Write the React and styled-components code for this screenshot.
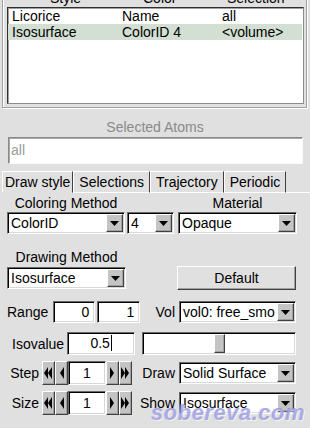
import React from 'react'
import styled, { createGlobalStyle, css } from 'styled-components'

const GlobalStyle = createGlobalStyle`
  html, body {
    margin: 0;
    padding: 0;
    background: #e0e0e0;
  }
  body {
    font-family: "Liberation Sans", Arial, sans-serif;
    font-size: 14px;
    color: #000;
  }
`

const sunken = css`
  box-sizing: border-box;
  border: 1px solid;
  border-color: #696969 #ffffff #ffffff #696969;
  box-shadow: inset 1px 1px 0 #000, inset -1px -1px 0 #d8d8d8;
  background: #fff;
`

const raised = css`
  box-sizing: border-box;
  border: 1px solid;
  border-color: #ffffff #404040 #404040 #ffffff;
  box-shadow: inset -1px -1px 0 #a0a0a0;
`

const Page = styled.div`
  position: relative;
  width: 310px;
  height: 428px;
  overflow: hidden;
  background: #e0e0e0;
`

const ListFrame = styled.div`
  margin: -12px 3px 0 2px;
  padding: 0 2px 3px 4px;
  border: 1px solid #a0a0a0;
  box-shadow: inset 1px 1px 0 #fff, 1px 1px 0 #fff;
`

const ColumnHeader = styled.div`
  display: grid;
  grid-template-columns: 93px 84px 1fr;
  padding-left: 43px;
  height: 18px;
  line-height: 18px;
`

const ListBox = styled.div`
  box-sizing: border-box;
  height: 97px;
  background: #fff;
  border: 1px solid;
  border-color: #303030 #8c8c8c #8c8c8c #303030;
  box-shadow: inset 1px 1px 0 #a0a0a0;
`

const ListRow = styled.div`
  display: grid;
  grid-template-columns: 110px 100px 1fr;
  height: 16px;
  line-height: 16px;
  padding-left: 4px;
  margin-right: 1px;
  background: ${p => (p.$selected ? '#d3dfd2' : 'transparent')};
`

const SectionTitle = styled.div`
  margin-top: 11px;
  height: 16px;
  line-height: 16px;
  text-align: center;
  color: #8a8a8a;
`

const SelectionField = styled.div`
  ${sunken}
  border-color: #8a8a8a #fafafa #fafafa #8a8a8a;
  box-shadow: inset 1px 1px 0 #a8a8a8;
  margin: 2px 7px 0 8px;
  height: 27px;
  line-height: 25px;
  padding-left: 2px;
  color: #9a9a9a;
`

const TabBar = styled.div`
  display: flex;
  margin-top: 7px;
  height: 22px;
  padding-left: 2px;
`

const Tab = styled.div`
  box-sizing: border-box;
  height: 22px;
  line-height: 20px;
  padding: 0 ${p => (p.$active ? '2px' : '5px')};
  border-left: 1px solid #fff;
  border-top: 1px solid #fff;
  border-right: 1px solid #404040;
  border-bottom: 1px solid ${p => (p.$active ? 'transparent' : '#fff')};
  white-space: nowrap;
`

const TabFill = styled.div`
  flex: 1;
  border-bottom: 1px solid #fff;
`

const Row = styled.div`
  display: flex;
  align-items: center;
  justify-content: space-between;
  height: ${p => p.$h || 22}px;
  margin-top: ${p => p.$mt || 0}px;
  padding: 0 ${p => p.$pr ?? 14}px 0 7px;
`

const Group = styled.div`
  display: flex;
  align-items: center;
  gap: ${p => p.$gap ?? 4}px;
`

const Caption = styled.div`
  width: ${p => p.$w}px;
  text-align: center;
  line-height: 17px;
`

const Label = styled.span`
  width: ${p => (p.$w ? `${p.$w}px` : 'auto')};
  margin-left: ${p => p.$ml || 0}px;
  text-align: right;
  white-space: nowrap;
`

const SelectBox = styled.div`
  ${sunken}
  display: flex;
  align-items: center;
  width: ${p => p.$w}px;
  height: 22px;
  padding: 0 1px 0 3px;
`

const SelectText = styled.span`
  flex: 1;
  overflow: hidden;
  white-space: nowrap;
`

const ArrowButton = styled.span`
  ${raised}
  display: flex;
  align-items: center;
  justify-content: center;
  flex: none;
  width: 17px;
  height: 18px;
  background: #c4c4c4;
`

const PushButton = styled.div`
  ${raised}
  display: flex;
  align-items: center;
  justify-content: center;
  width: 119px;
  height: 24px;
`

const Field = styled.div`
  ${sunken}
  width: ${p => p.$w}px;
  height: ${p => p.$h || 22}px;
  line-height: ${p => (p.$h || 22) - 2}px;
  padding: 0 5px;
  text-align: ${p => p.$align || 'right'};
`

const Caret = styled.span`
  display: inline-block;
  width: 1px;
  height: 16px;
  margin-left: 1px;
  vertical-align: -3px;
  background: #000;
`

const Trough = styled.div`
  ${sunken}
  position: relative;
  width: 154px;
  height: 23px;
`

const Thumb = styled.div`
  ${raised}
  position: absolute;
  top: 1px;
  width: 11px;
  height: 19px;
  background: #c4c4c4;
`

const Spin = styled.div`
  display: flex;
  align-items: center;
`

const SpinButton = styled.div`
  ${raised}
  display: flex;
  align-items: center;
  justify-content: center;
  width: 13px;
  height: 24px;
  background: #c4c4c4;
`

const Watermark = styled.div`
  position: absolute;
  right: 5px;
  bottom: 2px;
  font-size: 22px;
  font-weight: bold;
  font-style: italic;
  letter-spacing: 0.5px;
  color: rgba(130, 130, 215, 0.6);
  text-shadow: 1px 1px 0 rgba(255, 255, 255, 0.6), -1px 0 0 rgba(200, 200, 240, 0.5);
  pointer-events: none;
`

const DownArrow = () => (
  <svg width="9" height="5" viewBox="0 0 9 5">
    <polygon points="0,0 9,0 4.5,5" fill="#000" />
  </svg>
)

const Select = ({ w, children }) => (
  <SelectBox $w={w}>
    <SelectText>{children}</SelectText>
    <ArrowButton>
      <DownArrow />
    </ArrowButton>
  </SelectBox>
)

const SpinArrow = ({ dir, double }) => {
  const tri = x => (dir === 'left' ? `${x},6 ${x + 4},0 ${x + 4},12` : `${x + 4},6 ${x},0 ${x},12`)
  return (
    <svg width="9" height="12" viewBox="0 0 9 12">
      {double ? (
        <>
          <polygon points={tri(0)} fill="#000" />
          <polygon points={tri(4)} fill="#000" />
        </>
      ) : (
        <polygon points={tri(dir === 'left' ? 3 : 2)} fill="#000" />
      )}
    </svg>
  )
}

const Spinner = ({ value }) => (
  <Spin>
    <SpinButton><SpinArrow dir="left" double /></SpinButton>
    <SpinButton><SpinArrow dir="left" /></SpinButton>
    <Field $w={38} $h={24} $align="center">{value}</Field>
    <SpinButton><SpinArrow dir="right" /></SpinButton>
    <SpinButton><SpinArrow dir="right" double /></SpinButton>
  </Spin>
)

const Slider = ({ value, min = 0, max = 1 }) => {
  const travel = 154 - 4 - 11
  const left = 1 + ((value - min) / (max - min)) * travel
  return (
    <Trough>
      <Thumb style={{ left }} />
    </Trough>
  )
}

const reps = [
  { style: 'Licorice', color: 'Name', sel: 'all' },
  { style: 'Isosurface', color: 'ColorID 4', sel: '<volume>', selected: true },
]

const tabs = ['Draw style', 'Selections', 'Trajectory', 'Periodic']

export default function App() {
  return (
    <Page>
      <GlobalStyle />
      <ListFrame>
        <ColumnHeader>
          <span>Style</span>
          <span>Color</span>
          <span>Selection</span>
        </ColumnHeader>
        <ListBox>
          {reps.map(r => (
            <ListRow key={r.style} $selected={r.selected}>
              <span>{r.style}</span>
              <span>{r.color}</span>
              <span>{r.sel}</span>
            </ListRow>
          ))}
        </ListBox>
      </ListFrame>

      <SectionTitle>Selected Atoms</SectionTitle>
      <SelectionField>all</SelectionField>

      <TabBar>
        {tabs.map((t, i) => (
          <Tab key={t} $active={i === 0}>{t}</Tab>
        ))}
        <TabFill />
      </TabBar>

      <Row $h={17} $mt={2} $pr={13}>
        <Caption $w={118}>Coloring Method</Caption>
        <Caption $w={119}>Material</Caption>
      </Row>
      <Row $pr={13}>
        <Group $gap={2}>
          <Select w={118}>ColorID</Select>
          <Select w={47}>4</Select>
        </Group>
        <Select w={119}>Opaque</Select>
      </Row>

      <Row $h={17} $mt={15}>
        <Caption $w={119}>Drawing Method</Caption>
      </Row>
      <Row $h={24}>
        <Select w={119}>Isosurface</Select>
        <PushButton>Default</PushButton>
      </Row>

      <Row $mt={11}>
        <Group $gap={5}>
          <Label>Range</Label>
          <Group $gap={2}>
            <Field $w={42}>0</Field>
            <Field $w={43}>1</Field>
          </Group>
        </Group>
        <Group>
          <Label>Vol</Label>
          <Select w={117}>vol0: free_smo</Select>
        </Group>
      </Row>

      <Row $h={23} $mt={9}>
        <Group $gap={3}>
          <Label $ml={5}>Isovalue</Label>
          <Field $w={68} $h={23} $align="center">
            0.5<Caret />
          </Field>
        </Group>
        <Slider value={0.5} />
      </Row>

      <Row $h={24} $mt={6}>
        <Group $gap={3}>
          <Label $w={32}>Step</Label>
          <Spinner value={1} />
        </Group>
        <Group>
          <Label>Draw</Label>
          <Select w={117}>Solid Surface</Select>
        </Group>
      </Row>

      <Row $h={24} $mt={6}>
        <Group $gap={3}>
          <Label $w={32}>Size</Label>
          <Spinner value={1} />
        </Group>
        <Group>
          <Label>Show</Label>
          <Select w={117}>Isosurface</Select>
        </Group>
      </Row>

      <Watermark>sobereva.com</Watermark>
    </Page>
  )
}
